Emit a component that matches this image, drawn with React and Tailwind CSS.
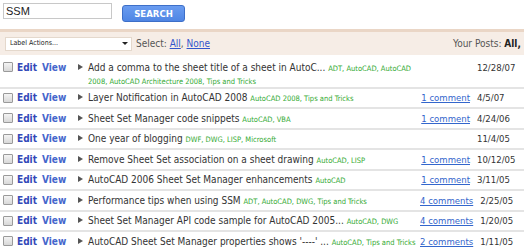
import React from 'react';

const posts = [
  {
    title: 'Add a comma to the sheet title of a sheet in AutoC...',
    labels: 'ADT, AutoCAD, AutoCAD 2008, AutoCAD Architecture 2008, Tips and Tricks',
    comments: '',
    date: '12/28/07',
  },
  { title: 'Layer Notification in AutoCAD 2008', labels: 'AutoCAD 2008, Tips and Tricks', comments: '1 comment', date: '4/5/07' },
  { title: 'Sheet Set Manager code snippets', labels: 'AutoCAD, VBA', comments: '1 comment', date: '4/24/06' },
  { title: 'One year of blogging', labels: 'DWF, DWG, LISP, Microsoft', comments: '', date: '11/4/05' },
  { title: 'Remove Sheet Set association on a sheet drawing', labels: 'AutoCAD, LISP', comments: '1 comment', date: '10/12/05' },
  { title: 'AutoCAD 2006 Sheet Set Manager enhancements', labels: 'AutoCAD', comments: '1 comment', date: '3/11/05' },
  { title: 'Performance tips when using SSM', labels: 'ADT, AutoCAD, DWG, Tips and Tricks', comments: '4 comments', date: '2/25/05' },
  { title: 'Sheet Set Manager API code sample for AutoCAD 2005...', labels: 'AutoCAD, DWG', comments: '4 comments', date: '1/20/05' },
  { title: "AutoCAD Sheet Set Manager properties shows '----' ...", labels: 'AutoCAD, Tips and Tricks', comments: '2 comments', date: '1/11/05' },
];

const font = { fontFamily: '"DejaVu Sans Condensed", "DejaVu Sans", Tahoma, sans-serif' };

function PostRow({ post, first }) {
  return (
    <div className={`flex items-start overflow-hidden border-b-2 border-[#e4e4e4] ${first ? 'h-[33.5px] pt-[5.5px]' : 'h-[20.5px] pt-[2.5px]'}`}>
      <div className="w-[17px] shrink-0 pl-[3px] pt-[1.5px]">
        <div className="w-[10px] h-[10px] border border-[#9a9a9a] bg-gradient-to-b from-[#f4f4f4] to-[#d8d8d8] rounded-[1px]" />
      </div>
      <a className="w-[25px] shrink-0 text-[10px] leading-[13px] font-bold text-[#3348b8]">Edit</a>
      <a className="w-[36px] shrink-0 text-[10px] leading-[13px] font-bold text-[#4466cc]">View</a>
      <div className="w-[10px] shrink-0 pt-[3px]">
        <div className="w-0 h-0 border-y-[3.5px] border-y-transparent border-l-[5px] border-l-[#555]" />
      </div>
      <div className="w-[332px] shrink-0 text-[10px] leading-[13px] text-[#333] pr-[2px]">
        {post.title}{' '}
        <span className="text-[7.5px] leading-[8px] text-[#33aa33]">{post.labels}</span>
      </div>
      <div className="flex-1 pr-[7px] text-right text-[9.5px] leading-[13px] text-[#3366cc] underline whitespace-nowrap">{post.comments}</div>
      <div className="w-[47px] shrink-0 text-[9.5px] leading-[13px] text-[#333] whitespace-nowrap">{post.date}</div>
    </div>
  );
}

export default function App() {
  return (
    <div className="w-[524px] h-[251px] overflow-hidden bg-white" style={font}>
      <div className="flex items-start h-[29px] pt-[3px] pl-[3px]">
        <div className="w-[109px] h-[16px] border border-[#c8c8c8] bg-white pl-[2px] text-[11px] leading-[14px] text-[#222]" style={{ fontFamily: '"Liberation Sans", Arial, sans-serif' }}>
          SSM
        </div>
        <button className="ml-[10px] mt-[2px] w-[63px] h-[17px] rounded-[3px] border border-[#3d6fc8] bg-gradient-to-b from-[#6a9cf0] to-[#4f86e4] text-white text-[9.5px] font-bold leading-[15px]">
          SEARCH
        </button>
      </div>
      <div className="border-t-[3px] border-[#ead6c6] bg-[#f6ede6] h-[26px] flex items-center pl-[5px] overflow-hidden">
        <div className="w-[448px] shrink-0 flex items-center">
          <div className="w-[127px] h-[14px] bg-white border border-[#e4d8cc] flex items-center pl-[4px] text-[7px] text-[#222]">
            <span className="flex-1">Label Actions...</span>
            <div className="mr-[3px] w-0 h-0 border-x-[3px] border-x-transparent border-t-[3px] border-t-[#222]" />
          </div>
          <span className="ml-[4px] text-[10px] text-[#555]">
            Select: <a className="text-[#3355cc] underline">All</a>, <a className="text-[#3355cc] underline">None</a>
          </span>
        </div>
        <span className="shrink-0 whitespace-nowrap text-[10px] text-[#555]">
          Your Posts: <b className="text-[#222]">All,</b> Drafts, Published
        </span>
      </div>
      <div>
        {posts.map((p, i) => (
          <PostRow key={p.title} post={p} first={i === 0} />
        ))}
      </div>
    </div>
  );
}
